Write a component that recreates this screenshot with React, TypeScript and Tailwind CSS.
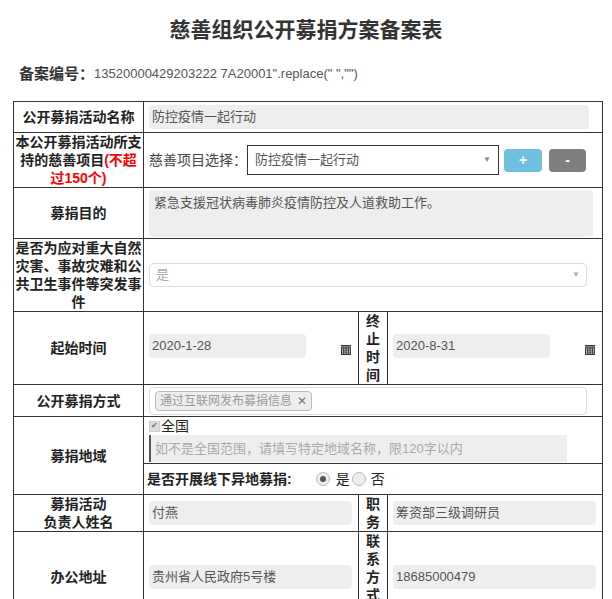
import React from "react";

const F = { fontFamily: '"Liberation Sans","Noto Sans CJK SC",sans-serif' };
const inp = "bg-[#eeeeee] rounded text-[#555] text-[13px] px-[3px] h-[24px] flex items-center";
const lab = "border border-[#333] text-center font-bold text-[14px] text-[#222] leading-[18px] px-0";
const td = "border border-[#333] align-middle pl-[5px] pr-[6px]";

function Cal() {
  return (
    <svg width="12" height="12" viewBox="0 0 12 12" className="shrink-0">
      <rect x="1" y="1" width="10" height="10" fill="#333" />
      <g fill="#fff">
        {[4.5, 6.5, 8.5].map((y) => [2, 4.3, 6.6, 8.9].map((x) => <rect key={x + "-" + y} x={x} y={y} width="1.2" height="1.2" />))}
      </g>
      <rect x="1" y="2.6" width="10" height="0.6" fill="#fff" />
    </svg>
  );
}

export default function App() {
  return (
    <div style={F} className="w-[612px] h-[599px] overflow-hidden bg-white">
      <div className="text-center font-bold text-[21px] text-[#333] pt-[14px] h-[54px]">慈善组织公开募捐方案备案表</div>
      <div className="flex items-center h-[40px] text-[13px] text-[#555]">
        <span className="ml-[19px] font-bold text-[15px] text-[#333]">备案编号：</span>
        <span>13520000429203222 7A20001".replace(" ","")</span>
      </div>
      <table className="ml-[13px] mt-[7px] border-collapse table-fixed w-[589px]">
        <colgroup>
          <col className="w-[130px]" />
          <col className="w-[215px]" />
          <col className="w-[29px]" />
          <col className="w-[215px]" />
        </colgroup>
        <tbody>
          <tr className="h-[31px]">
            <td className={lab}>公开募捐活动名称</td>
            <td className={td + " pr-[13px]"} colSpan={3}><div className={inp}>防控疫情一起行动</div></td>
          </tr>
          <tr className="h-[55px]">
            <td className={lab}>本公开募捐活动所支持的慈善项目<span className="text-[#f00]">(不超过150个)</span></td>
            <td className={td + " pr-[3px]"} colSpan={3}>
              <div className="flex items-center text-[14px] text-[#444]">
                <span>慈善项目选择：</span>
                <div className="w-[252px] h-[30px] border border-[#333] flex items-center justify-between px-[7px] text-[13px] text-[#555]">防控疫情一起行动<span className="text-[8px] text-[#888]">▼</span></div>
                <div className="ml-[5px] w-[38px] h-[23px] bg-[#6fc0df] rounded text-white font-bold flex items-center justify-center">+</div>
                <div className="ml-[7px] w-[37px] h-[23px] bg-[#7f7f7f] rounded text-white font-bold flex items-center justify-center">-</div>
              </div>
            </td>
          </tr>
          <tr className="h-[51px]">
            <td className={lab}>募捐目的</td>
            <td className={td + " pr-[9px]"} colSpan={3}>
              <div className="bg-[#eeeeee] rounded h-[47px] px-[5px] pt-[3px] text-[13px] text-[#555]">紧急支援冠状病毒肺炎疫情防控及人道救助工作。</div>
            </td>
          </tr>
          <tr className="h-[73px]">
            <td className={lab}>是否为应对重大自然灾害、事故灾难和公共卫生事件等突发事件</td>
            <td className={td + " pr-[15px]"} colSpan={3}>
              <div className="border border-[#ddd] rounded h-[24px] flex items-center justify-between px-[6px] text-[13px] text-[#aaa]">是<span className="text-[8px]">▼</span></div>
            </td>
          </tr>
          <tr className="h-[73px]">
            <td className={lab}>起始时间</td>
            <td className={td + " pr-[4px]"}>
              <div className="flex items-center justify-between -mt-[5px]"><div className={inp + " w-[157px]"}>2020-1-28</div><div className="mt-[8px]"><Cal /></div></div>
            </td>
            <td className="border border-[#333] text-center font-bold text-[14px] leading-[18px] text-[#222]">终<br />止<br />时<br />间</td>
            <td className={td + " pr-[4px]"}>
              <div className="flex items-center justify-between -mt-[5px]"><div className={inp + " w-[157px]"}>2020-8-31</div><div className="mt-[8px]"><Cal /></div></div>
            </td>
          </tr>
          <tr className="h-[32px]">
            <td className={lab}>公开募捐方式</td>
            <td className={td + " pr-[15px]"} colSpan={3}>
              <div className="border border-[#ddd] rounded h-[28px] flex items-center px-[5px]">
                <span className="border border-[#bbb] bg-[#eee] rounded text-[12px] text-[#999] px-[4px] h-[20px] flex items-center">通过互联网发布募捐信息 <span className="ml-[5px] text-[#777]">✕</span></span>
              </div>
            </td>
          </tr>
          <tr className="h-[47px]">
            <td className={lab} rowSpan={2}>募捐地域</td>
            <td className="border border-[#333] pl-[5px] align-top" colSpan={3}>
              <div className="flex items-center text-[14px] text-[#222] h-[18px]"><span className="w-[11px] h-[11px] bg-[#ddd] border border-[#ccc] text-[8px] text-[#777] flex items-center justify-center mr-[1px]">✔</span>全国</div>
              <div className="w-[418px] h-[27px] bg-[#eeeeee] border-l-2 border-[#555] text-[13px] text-[#aaa] flex items-center px-[4px]">如不是全国范围，请填写特定地域名称，限120字以内</div>
            </td>
          </tr>
          <tr className="h-[31px]">
            <td className="border border-[#333] px-[3px]" colSpan={3}>
              <div className="flex items-center text-[14px] text-[#222]">
                <span className="font-bold">是否开展线下异地募捐:</span>
                <span className="ml-[24px] w-[14px] h-[14px] rounded-full border border-[#bbb] bg-[#eee] flex items-center justify-center"><span className="w-[6px] h-[6px] rounded-full bg-[#555]" /></span>
                <span className="ml-[6px]">是</span>
                <span className="ml-[2px] w-[14px] h-[14px] rounded-full border border-[#bbb] bg-[#eee]" />
                <span className="ml-[5px]">否</span>
              </div>
            </td>
          </tr>
          <tr className="h-[37px]">
            <td className={lab}>募捐活动<br />负责人姓名</td>
            <td className={td + " pr-0"}><div className={inp}>付燕</div></td>
            <td className="border border-[#333] text-center font-bold text-[14px] leading-[18px] text-[#222]">职<br />务</td>
            <td className={td + " pr-[2px]"}><div className={inp}>筹资部三级调研员</div></td>
          </tr>
          <tr className="h-[90px]">
            <td className={lab}>办公地址</td>
            <td className={td + " pr-0"}><div className={inp}>贵州省人民政府5号楼</div></td>
            <td className="border border-[#333] text-center font-bold text-[14px] leading-[18px] text-[#222] align-top">联<br />系<br />方<br />式</td>
            <td className={td + " pr-[2px]"}><div className={inp}>18685000479</div></td>
          </tr>
        </tbody>
      </table>
    </div>
  );
}
